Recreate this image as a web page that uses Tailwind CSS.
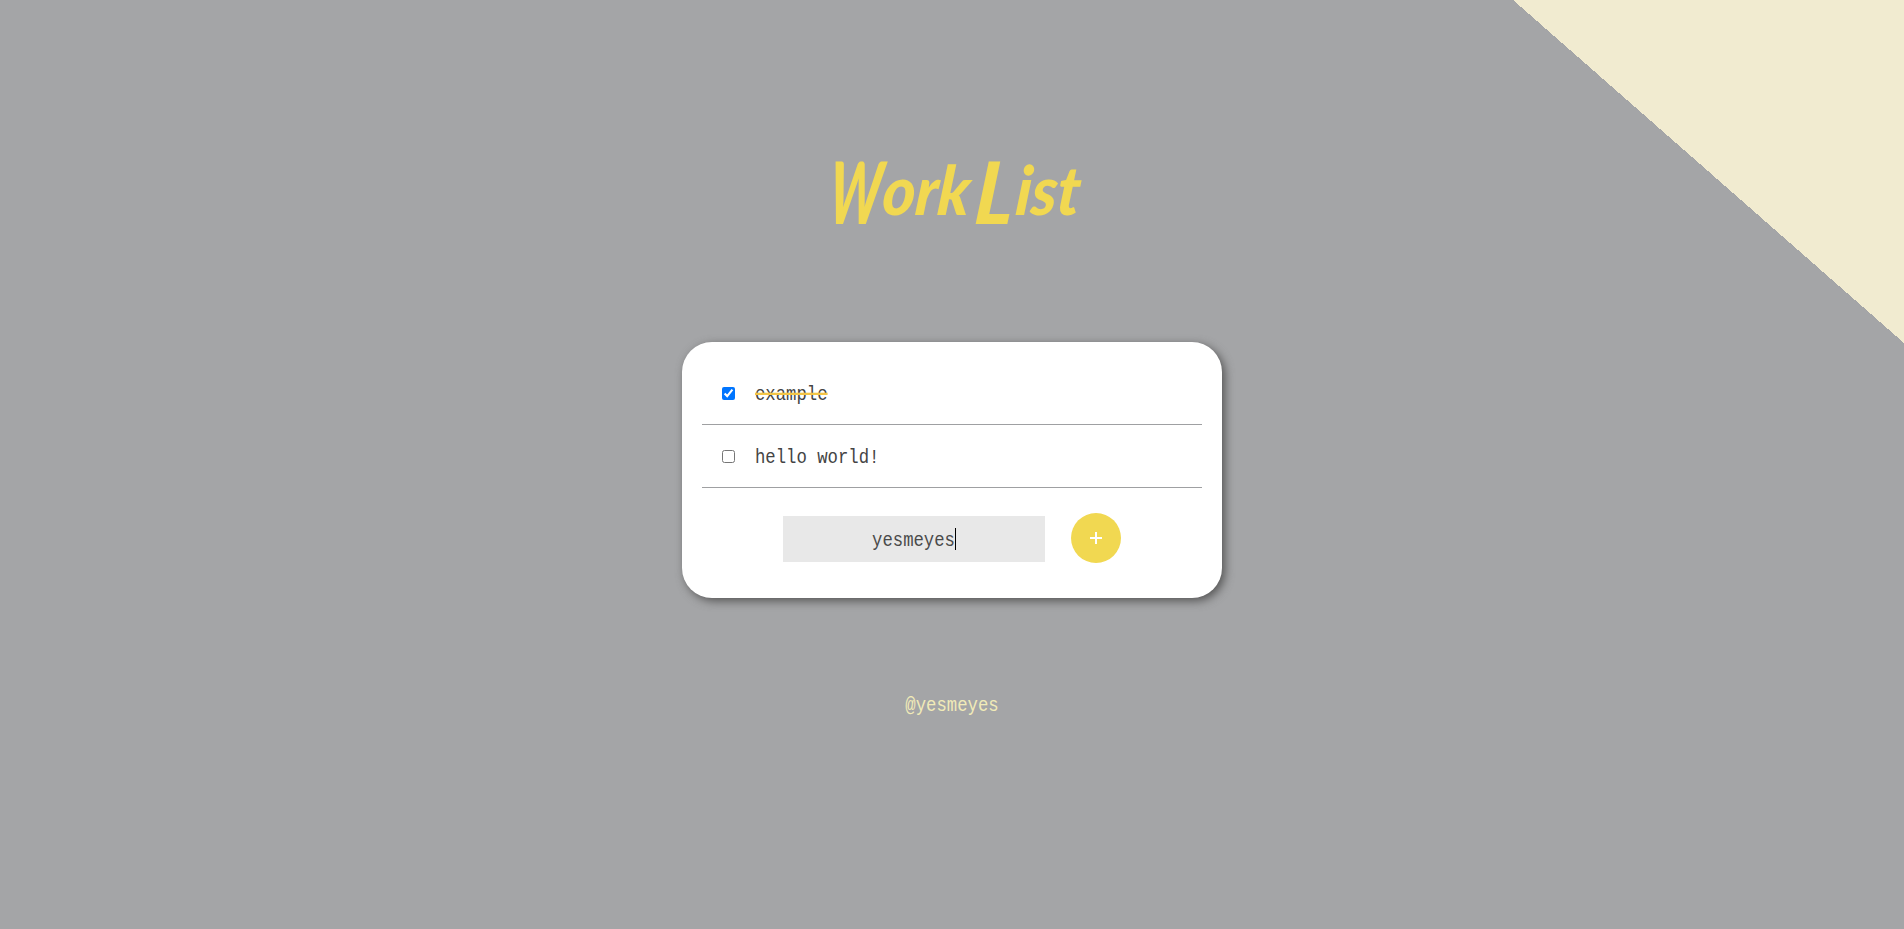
<!DOCTYPE html>
<html lang="en">
<head>
<meta charset="utf-8">
<title>Work List</title>
<script src="https://cdn.jsdelivr.net/npm/@tailwindcss/browser@4"></script>
</head>
<body class="relative h-screen overflow-hidden bg-[#a4a5a7] font-['Liberation_Mono',monospace] text-[17.3px]">
<div class="absolute top-0 right-0 h-[342.5px] w-[391.5px] bg-[linear-gradient(to_top_right,transparent_50%,#f1ebd0_50%)]"></div>
<main class="flex flex-col items-center">
  <header class="flex h-[342px] items-center justify-center pt-[22px] pl-2">
    <h1 class="-skew-x-6 scale-x-[.92] whitespace-nowrap font-['Lato','Liberation_Sans',sans-serif] text-[68px] leading-none font-black text-[#f1d851] italic"><span class="inline-block w-[58px] origin-bottom-left translate-y-[9px] scale-x-[.68] text-[86px]">W</span>ork<span class="ml-1.5 inline-block w-[44px] translate-y-[9px] text-[86px]">L</span>ist</h1>
  </header>
  <section class="h-64 w-[540px] rounded-[30px] bg-white p-5 shadow-[3px_3px_10px_#555]">
    <ul class="text-[#444]">
      <li class="flex h-[63px] items-center border-b border-[#9fa0a2] pl-5">
        <input type="checkbox" checked class="m-0 mr-5 size-[13px]">
        <span class="translate-y-[2px] scale-y-115 line-through decoration-[#f3c546] decoration-2">example</span>
      </li>
      <li class="flex h-[63px] items-center border-b border-[#9fa0a2] pl-5">
        <input type="checkbox" class="m-0 mr-5 size-[13px]">
        <span class="translate-y-[2px] scale-y-115">hello world!</span>
      </li>
    </ul>
    <form class="flex items-center justify-center gap-[26px] pt-[25px]">
      <div class="mt-[2px] flex h-[46px] w-[262px] items-center justify-center bg-[#e8e8e8] text-[#4a4a4a]"><span class="translate-y-[2px] scale-y-115">yesmeyes</span><span class="h-[22px] w-px bg-black"></span></div>
      <button type="button" aria-label="Add" class="flex size-[50px] items-center justify-center rounded-full bg-[#f1d851] text-white">
        <svg class="size-3" viewBox="0 0 12 12" fill="none" stroke="currentColor" stroke-width="2"><path d="M6 0v12M0 6h12"/></svg>
      </button>
    </form>
  </section>
  <footer class="pt-[95px] leading-6 text-[#f1ebb8]"><span class="inline-block translate-y-px scale-y-115">@yesmeyes</span></footer>
</main>
</body>
</html>
